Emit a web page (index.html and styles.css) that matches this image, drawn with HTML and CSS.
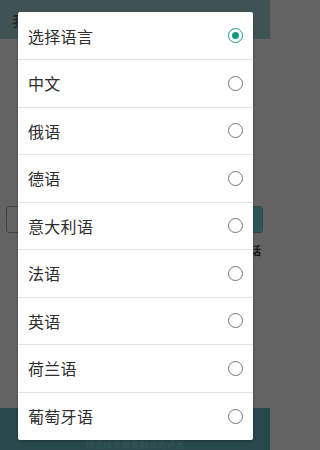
FILE: index.html
```html
<!DOCTYPE html>
<html lang="zh">
<head>
<meta charset="utf-8">
<link rel="stylesheet" href="styles.css">
</head>
<body>
<div class="screen">
  <header class="appbar"><span class="appbar-title">我的</span></header>
  <main class="content">
    <div class="search">
      <div class="search-field"></div>
      <div class="search-btn"></div>
    </div>
    <div class="hint">话</div>
  </main>
  <footer class="bottombar"><span class="bottom-text">请选择您需要翻译的语言</span></footer>
</div>

<div class="dialog">
  <div class="row"><span class="label">选择语言</span><span class="radio checked"></span></div>
  <div class="row"><span class="label">中文</span><span class="radio"></span></div>
  <div class="row"><span class="label">俄语</span><span class="radio"></span></div>
  <div class="row"><span class="label">德语</span><span class="radio"></span></div>
  <div class="row"><span class="label">意大利语</span><span class="radio"></span></div>
  <div class="row"><span class="label">法语</span><span class="radio"></span></div>
  <div class="row"><span class="label">英语</span><span class="radio"></span></div>
  <div class="row"><span class="label">荷兰语</span><span class="radio"></span></div>
  <div class="row last"><span class="label">葡萄牙语</span><span class="radio"></span></div>
</div>
</body>
</html>
```

FILE: styles.css
```css
html, body {
  margin: 0;
  padding: 0;
  background: #636363;
}
body {
  height: 450px;
  overflow: hidden;
  position: relative;
  font-family: "Noto Sans CJK SC", "Noto Sans", sans-serif;
}
.screen {
  display: flex;
  flex-direction: column;
  width: 270px;
  height: 450px;
  background: #636363;
}
.appbar {
  height: 39px;
  background: #3f5355;
  display: flex;
  align-items: center;
  padding-left: 12px;
}
.appbar-title {
  font-size: 14px;
  color: #1e2526;
}
.content {
  flex: 1;
  background: #636363;
  padding: 167px 7px 0 6px;
  display: flex;
  flex-direction: column;
}
.search {
  display: flex;
  height: 27px;
  border: 1px solid #3e4546;
  border-radius: 3px;
  box-sizing: border-box;
  overflow: hidden;
}
.search-field {
  flex: 1;
}
.search-btn {
  width: 11px;
  background: #2d5658;
}
.hint {
  align-self: flex-end;
  font-size: 11px;
  font-weight: bold;
  color: #151515;
  margin-top: 11px;
  margin-right: 2px;
  line-height: 12px;
}
.bottombar {
  height: 42px;
  background: #28494b;
  display: flex;
  align-items: flex-end;
  justify-content: center;
  box-sizing: border-box;
  padding-bottom: 1px;
}
.bottom-text {
  font-size: 9px;
  color: #33585a;
  line-height: 9px;
}
.dialog {
  position: absolute;
  left: 18px;
  top: 12px;
  width: 235px;
  background: #ffffff;
  border-radius: 2px;
  box-shadow: 0 1px 3px rgba(0,0,0,0.25);
}
.row {
  height: 47.5px;
  box-sizing: border-box;
  border-bottom: 1px solid #e4e4e4;
  display: flex;
  align-items: center;
  justify-content: space-between;
  padding: 0 10px 0 10px;
}
.row:first-child {
  height: 48px;
}
.row.last {
  border-bottom: none;
}
.label {
  font-size: 16px;
  color: #2e2e2e;
  letter-spacing: 0.3px;
}
.radio {
  width: 15px;
  height: 15px;
  box-sizing: border-box;
  border: 1.5px solid #757575;
  border-radius: 50%;
  display: flex;
  align-items: center;
  justify-content: center;
}
.radio.checked {
  border-color: #17987e;
}
.radio.checked::after {
  content: "";
  width: 7px;
  height: 7px;
  border-radius: 50%;
  background: #17987e;
}
```
